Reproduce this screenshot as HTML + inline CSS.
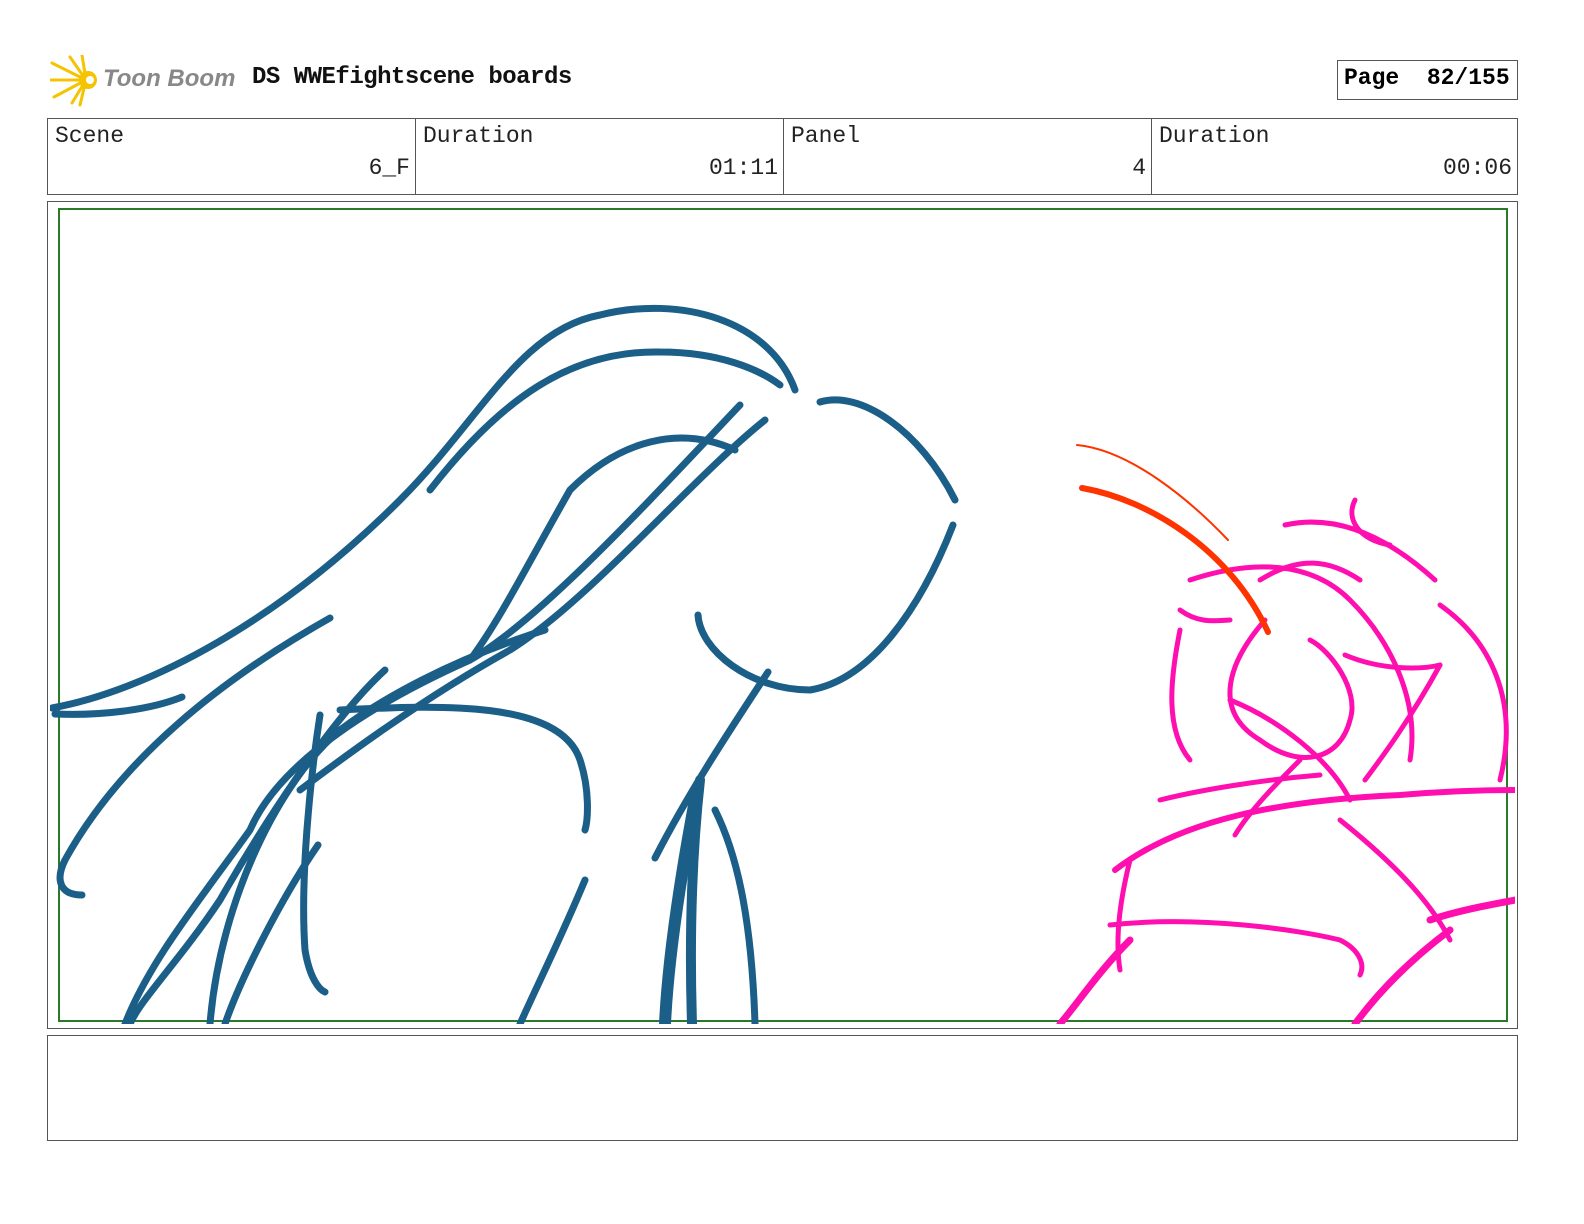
<!DOCTYPE html>
<html><head><meta charset="utf-8"><style>
body{margin:0;width:1584px;height:1224px;background:#fff;position:relative;font-family:"Liberation Mono",monospace;overflow:hidden}
.a{position:absolute;white-space:nowrap}
.cell{position:absolute;top:118px;height:77px;border:1px solid #555;box-sizing:border-box;font-size:23px;color:#222}
.cell .l{position:absolute;left:7px;top:4px}
.cell .v{position:absolute;right:5px;top:36px}
</style></head><body>
<svg class="a" style="left:50px;top:55px" width="52" height="52" viewBox="0 0 52 52">
<g stroke="#f5c400" stroke-width="3" stroke-linecap="round">
<line x1="36" y1="25" x2="2" y2="8"/><line x1="36" y1="25" x2="0" y2="25"/><line x1="36" y1="25" x2="4" y2="42"/><line x1="36" y1="25" x2="20" y2="2"/><line x1="36" y1="25" x2="22" y2="48"/><line x1="36" y1="25" x2="32" y2="0"/><line x1="36" y1="25" x2="30" y2="50"/></g>
<circle cx="38" cy="25" r="9" fill="#f5c400"/><circle cx="40" cy="25" r="4" fill="#fff"/></svg>
<div class="a" style="left:103px;top:65px;font-family:'Liberation Sans',sans-serif;font-style:italic;font-weight:bold;font-size:24px;color:#888">Toon Boom</div>
<div class="a" style="left:252px;top:64px;font-size:24px;font-weight:bold;color:#111;letter-spacing:-0.5px">DS WWEfightscene boards</div>
<div class="a" style="left:1337px;top:60px;width:181px;height:40px;border:1px solid #555;box-sizing:border-box;font-size:23px;font-weight:bold;padding:4px 0 0 6px">Page&nbsp; 82/155</div>
<div class="cell" style="left:47px;width:369px"><span class="l">Scene</span><span class="v">6_F</span></div>
<div class="cell" style="left:415px;width:369px"><span class="l">Duration</span><span class="v">01:11</span></div>
<div class="cell" style="left:783px;width:369px"><span class="l">Panel</span><span class="v">4</span></div>
<div class="cell" style="left:1151px;width:367px"><span class="l">Duration</span><span class="v">00:06</span></div>
<div class="a" style="left:47px;top:201px;width:1471px;height:828px;border:1px solid #555;box-sizing:border-box"></div>
<div class="a" style="left:47px;top:1035px;width:1471px;height:106px;border:1px solid #555;box-sizing:border-box"></div>
<svg class="a" style="left:0;top:0" width="1584" height="1224">
<defs><clipPath id="c"><rect x="50" y="204" width="1465" height="820"/></clipPath></defs>
<rect x="59" y="209" width="1448" height="812" fill="none" stroke="#2a7a2a" stroke-width="2"/>
<g clip-path="url(#c)" fill="none" stroke-linecap="round" stroke-linejoin="round">
<g stroke="#1b5e88" stroke-width="7">
<path d="M52 708 C150 690 280 620 400 500 C480 420 520 330 600 315 C680 295 770 320 795 390"/>
<path d="M430 490 C500 400 570 350 660 352 C720 352 760 370 780 385"/>
<path d="M55 714 C100 716 150 710 182 697"/>
<path d="M330 618 C220 680 120 760 65 860 C55 880 60 895 82 895"/>
<path d="M820 402 C860 390 920 430 955 500"/>
<path d="M953 525 C920 610 870 680 810 690 C750 690 700 650 698 615"/>
<path d="M740 405 C650 500 540 620 470 660 C380 700 280 760 250 830 C200 900 150 960 125 1024"/>
<path d="M765 420 C690 480 590 600 510 650 C420 700 340 760 300 790"/>
<path d="M735 450 C680 425 620 440 570 490 C530 560 500 620 470 660"/>
<path d="M545 630 C450 660 380 700 340 730 C280 780 220 900 210 1024"/>
<path d="M340 710 C440 705 560 700 580 760 C590 790 588 820 585 830"/>
<path d="M385 670 C330 720 260 830 220 900 C180 960 140 1000 130 1024"/>
<path d="M320 715 C310 780 300 880 305 950 C310 980 320 990 325 992"/>
<path d="M318 845 C280 900 240 980 225 1024"/>
<path d="M585 880 C560 940 535 990 520 1024"/>
<path d="M768 672 C730 730 690 790 655 858"/>
<path d="M715 810 C740 860 752 930 755 1024"/>
<path d="M700 780 C690 870 690 960 692 1024" stroke-width="10"/>
<path d="M695 800 C680 880 668 960 665 1024" stroke-width="12"/>
</g>
<g stroke="#ff0fb0" stroke-width="5">
<path d="M1265 620 C1230 660 1210 710 1260 740 C1300 770 1340 760 1350 720 C1360 690 1330 650 1310 640"/>
<path d="M1190 580 C1250 560 1310 560 1350 600 C1390 640 1420 700 1410 760"/>
<path d="M1285 525 C1330 515 1380 530 1435 580"/>
<path d="M1440 605 C1490 640 1520 700 1500 780"/>
<path d="M1180 630 C1170 680 1165 730 1190 760"/>
<path d="M1230 700 C1280 720 1330 760 1350 800"/>
<path d="M1345 655 C1380 670 1420 670 1440 665"/>
<path d="M1440 665 C1410 720 1380 760 1365 780"/>
<path d="M1160 800 C1200 790 1260 780 1320 775"/>
<path d="M1115 870 C1180 820 1280 800 1400 795 C1460 790 1500 790 1515 790" stroke-width="6"/>
<path d="M1130 860 C1120 900 1115 940 1120 970"/>
<path d="M1110 925 C1200 915 1300 930 1340 940 C1360 950 1365 965 1360 975"/>
<path d="M1130 940 C1100 970 1080 1000 1060 1024" stroke-width="7"/>
<path d="M1340 820 C1390 860 1430 900 1450 940"/>
<path d="M1450 930 C1410 960 1380 990 1355 1024" stroke-width="7"/>
<path d="M1430 920 C1460 910 1490 905 1515 900" stroke-width="7"/>
<path d="M1300 760 C1280 780 1250 810 1235 835"/>
<path d="M1355 500 C1345 520 1360 540 1390 545"/>
<path d="M1260 580 C1300 555 1330 560 1360 580"/>
<path d="M1180 610 C1200 625 1220 620 1230 620"/>
</g>
<g stroke="#ff3300">
<path d="M1082 488 C1150 500 1230 550 1268 632" stroke-width="6"/>
<path d="M1077 445 C1130 450 1190 500 1228 540" stroke-width="2"/>
</g>
</g>
</svg>
</body></html>
